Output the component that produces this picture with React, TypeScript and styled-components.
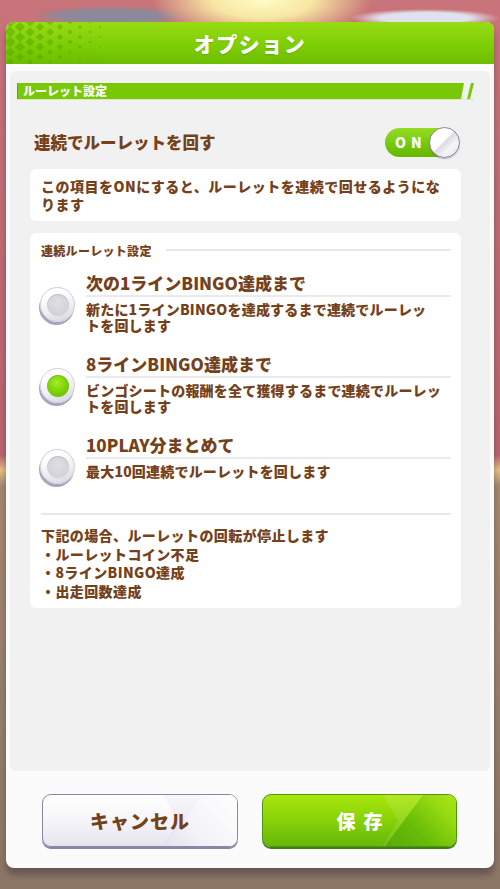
import React from 'react';
import styled, { createGlobalStyle } from 'styled-components';

const brown = '#74411a';

const GlobalStyle = createGlobalStyle`
  html, body {
    margin: 0;
    padding: 0;
    width: 500px;
    height: 889px;
    overflow: hidden;
  }
  body {
    font-family: "Noto Sans CJK JP", "Noto Sans", sans-serif;
    font-weight: 900;
  }
  * { box-sizing: border-box; }
`;

interface IOption {
  title: string,
  desc: string[],
  checked: boolean
}

const options: IOption[] = [
  { title: '次の1ラインBINGO達成まで', desc: ['新たに1ラインBINGOを達成するまで連続でルーレッ', 'トを回します'], checked: false },
  { title: '8ラインBINGO達成まで', desc: ['ビンゴシートの報酬を全て獲得するまで連続でルーレッ', 'トを回します'], checked: true },
  { title: '10PLAY分まとめて', desc: ['最大10回連続でルーレットを回します'], checked: false },
];

const notes = [
  '下記の場合、ルーレットの回転が停止します',
  '・ルーレットコイン不足',
  '・8ラインBINGO達成',
  '・出走回数達成',
];

const HeaderPattern = () => {
  const items = [];
  for (let i = 0; i < 10; i++) {
    for (let j = 0; j < 5; j++) {
      const cx = 4 + i * 10;
      const cy = j * 10 + (i % 2 ? 5 : 0);
      const s = Math.max(0, 5.6 - i * 0.5 - (j > 2 ? (j - 2) * 0.8 : 0));
      if (s <= 0.5) continue;
      items.push(
        <polygon
          key={`${i}-${j}`}
          points={`${cx},${cy - s} ${cx + s},${cy} ${cx},${cy + s} ${cx - s},${cy}`}
        />
      );
    }
  }
  return (
    <PatternSvg width="110" height="42" viewBox="0 0 110 42">
      <g fill="#55a800" opacity="0.5">{items}</g>
    </PatternSvg>
  );
};

const App = () => {
  return (
    <Page>
      <GlobalStyle />
      <Dialog>
        <Header>
          <HeaderPattern />
          <HeaderTitle>オプション</HeaderTitle>
        </Header>
        <Body>
          <Panel>
            <SectionBar>
              <BarMain>ルーレット設定</BarMain>
              <BarStripe />
            </SectionBar>
            <Content>
              <ToggleRow>
                <ToggleLabel>連続でルーレットを回す</ToggleLabel>
                <Toggle>
                  <ToggleText>ON</ToggleText>
                  <Knob />
                </Toggle>
              </ToggleRow>
              <InfoBox>
                この項目をONにすると、ルーレットを連続で回せるようにな<br />ります
              </InfoBox>
              <Card>
                <CardHeader>
                  <CardHeaderText>連続ルーレット設定</CardHeaderText>
                  <CardHeaderLine />
                </CardHeader>
                <OptionList>
                  {options.map((o) => (
                    <OptionRow key={o.title}>
                      <Radio>
                        <RadioDot $checked={o.checked} />
                      </Radio>
                      <OptionText>
                        <OptionTitle>{o.title}</OptionTitle>
                        <OptionDesc>
                          {o.desc.map((line, i) => (
                            <React.Fragment key={i}>
                              {i > 0 && <br />}
                              {line}
                            </React.Fragment>
                          ))}
                        </OptionDesc>
                      </OptionText>
                    </OptionRow>
                  ))}
                </OptionList>
                <Divider />
                <Notes>
                  {notes.map((n) => (
                    <div key={n}>{n}</div>
                  ))}
                </Notes>
              </Card>
            </Content>
          </Panel>
        </Body>
        <Footer>
          <CancelButton>
            <ButtonLabel>キャンセル</ButtonLabel>
          </CancelButton>
          <SaveButton>
            <ButtonLabel>保存</ButtonLabel>
          </SaveButton>
        </Footer>
      </Dialog>
    </Page>
  );
};

const Page = styled.div`
  width: 500px;
  height: 889px;
  padding: 22px 6px 21px;
  background:
    radial-gradient(ellipse 110px 40px at 262px 0px, #fffcc8 0%, #f8e7a2 45%, rgba(240, 190, 140, 0) 100%),
    radial-gradient(ellipse 80px 10px at 110px 16px, #8c8a9a 0%, #8c8a9a 60%, rgba(140, 138, 154, 0) 100%),
    radial-gradient(ellipse 75px 9px at 425px 18px, #dfe1ee 0%, #dfe1ee 60%, rgba(223, 225, 238, 0) 100%),
    linear-gradient(180deg, #c8747a 0px, #b9646e 455px, #e6c183 470px, #a5896f 486px, #977f6c 700px, #8b7666 889px);
`;

const Dialog = styled.div`
  height: 100%;
  display: flex;
  flex-direction: column;
  background: #fbfbfb;
  border-radius: 8px;
  overflow: hidden;
  box-shadow: 0 7px 6px rgba(60, 50, 60, 0.45);
`;

const Header = styled.header`
  position: relative;
  flex: none;
  height: 42px;
  display: flex;
  align-items: center;
  justify-content: center;
  background: linear-gradient(180deg, #97dc12 0%, #7ccc06 60%, #6cbd00 100%);
`;

const PatternSvg = styled.svg`
  position: absolute;
  left: 0;
  top: 0;
`;

const HeaderTitle = styled.h1`
  position: relative;
  margin: 0;
  font-size: 21px;
  font-weight: 900;
  letter-spacing: 1.5px;
  color: #ffffff;
  text-shadow: 0 1px 1px rgba(60, 120, 0, 0.35);
`;

const Body = styled.div`
  flex: 1;
  padding: 7px 4px 0;
`;

const Panel = styled.div`
  height: 100%;
  background: #f1f1f1;
  border-radius: 6px;
  padding-top: 12px;
`;

const SectionBar = styled.div`
  display: flex;
  gap: 3px;
  width: 457px;
  margin-left: 7px;
  height: 17px;
  border-bottom: 1px solid #d6ecbf;
`;

const BarMain = styled.div`
  flex: 1;
  height: 16px;
  line-height: 16px;
  padding-left: 5px;
  font-size: 12px;
  color: #ffffff;
  background: #78c808;
  border-left: 1px solid #5fa800;
  clip-path: polygon(0 0, 100% 0, calc(100% - 3px) 100%, 0 100%);
`;

const BarStripe = styled.div`
  width: 7px;
  height: 16px;
  background: #78c808;
  clip-path: polygon(4px 0, 100% 0, 3px 100%, 0 100%);
`;

const Content = styled.div`
  width: 431px;
  margin-left: 20px;
`;

const ToggleRow = styled.div`
  display: flex;
  align-items: center;
  justify-content: space-between;
  height: 30px;
  margin-top: 27px;
  padding: 0 2px 0 4px;
`;

const ToggleLabel = styled.span`
  font-size: 16.5px;
  color: ${brown};
`;

const Toggle = styled.div`
  position: relative;
  width: 74px;
  height: 29px;
  border-radius: 15px;
  background: linear-gradient(180deg, #96dc24 0%, #78c810 55%, #66b600 100%);
`;

const ToggleText = styled.span`
  position: absolute;
  left: 10px;
  top: 0;
  line-height: 29px;
  font-size: 14px;
  letter-spacing: 5px;
  color: #ffffff;
`;

const Knob = styled.div`
  position: absolute;
  right: -1px;
  top: -1px;
  width: 31px;
  height: 31px;
  border-radius: 50%;
  border: 1.5px solid #8a86a2;
  background: linear-gradient(135deg, #ffffff 0%, #ffffff 45%, #dcdce4 50%, #f4f4f8 70%, #e2e2ea 100%);
  box-shadow: 0 1px 1px rgba(80, 70, 110, 0.35);
`;

const InfoBox = styled.div`
  margin-top: 12px;
  padding: 8px 10px 8px 11px;
  background: #ffffff;
  border-radius: 6px;
  font-size: 14px;
  line-height: 18px;
  letter-spacing: 0.5px;
  color: ${brown};
`;

const Card = styled.div`
  margin-top: 12px;
  padding: 9px 10px 8px 11px;
  background: #ffffff;
  border-radius: 6px;
  color: ${brown};
`;

const CardHeader = styled.div`
  display: flex;
  align-items: center;
  gap: 14px;
  height: 16px;
`;

const CardHeaderText = styled.span`
  font-size: 12px;
  letter-spacing: 0.3px;
`;

const CardHeaderLine = styled.div`
  flex: 1;
  height: 2px;
  background: #e8e8e8;
`;

const OptionList = styled.div`
  display: flex;
  flex-direction: column;
  gap: 19px;
  margin-top: 13px;
`;

const OptionRow = styled.div`
  display: flex;
  align-items: flex-start;
  gap: 11px;
`;

const Radio = styled.div`
  flex: none;
  width: 35px;
  height: 35px;
  margin: 16px 0 0 -1px;
  border-radius: 50%;
  display: flex;
  align-items: center;
  justify-content: center;
  border: 1px solid #cfcdd8;
  background: linear-gradient(160deg, #ffffff 25%, #efeef3 60%, #d6d4df 100%);
  box-shadow: -1px 3px 0 #a8a3bf;
`;

const RadioDot = styled.div<{ $checked: boolean }>`
  width: 22px;
  height: 22px;
  border-radius: 50%;
  background: ${(p) =>
    p.$checked
      ? 'radial-gradient(circle at 45% 35%, #a6ec22 0%, #80d40c 45%, #62b600 100%)'
      : 'radial-gradient(circle at 50% 40%, #dedee3 0%, #d2d2d8 70%, #c6c6ce 100%)'};
  box-shadow: inset 0 1px 1px rgba(0, 0, 0, 0.12);
`;

const OptionText = styled.div`
  flex: 1;
`;

const OptionTitle = styled.div`
  height: 26px;
  line-height: 24px;
  font-size: 17px;
  border-bottom: 2px solid #ebebeb;
`;

const OptionDesc = styled.div`
  margin-top: 4px;
  font-size: 14px;
  line-height: 16px;
  letter-spacing: 0.2px;
`;

const Divider = styled.div`
  height: 2px;
  margin-top: 29px;
  background: #e8e8e8;
`;

const Notes = styled.div`
  margin-top: 11px;
  font-size: 14px;
  line-height: 18.5px;
  letter-spacing: 0.4px;
`;

const Footer = styled.div`
  flex: none;
  height: 97px;
  display: flex;
  gap: 24px;
  padding: 23px 0 0 36px;
`;

const ButtonBase = styled.div`
  position: relative;
  height: 53px;
  border-radius: 9px;
  overflow: hidden;
  display: flex;
  align-items: center;
  justify-content: center;
  font-size: 19px;
  &::before,
  &::after {
    content: '';
    position: absolute;
    top: 0;
    bottom: 0;
    left: 120px;
    right: 0;
  }
  &::before {
    clip-path: polygon(0 0, 100% 0, 100% 100%, 0 100%, 15px 50%);
  }
  &::after {
    clip-path: polygon(40px 0, 100% 0, 100% 100%, 2px 100%);
  }
`;

const CancelButton = styled(ButtonBase)`
  width: 196px;
  color: ${brown};
  letter-spacing: 1px;
  border: 1.5px solid #8a86a6;
  background: linear-gradient(180deg, #ffffff 0%, #f6f5f9 50%, #e6e4ee 100%);
  box-shadow: 0 2px 0 #8a86a6;
  &::before {
    background: linear-gradient(180deg, rgba(235, 233, 242, 0.4), rgba(225, 223, 236, 0.5));
  }
  &::after {
    background: linear-gradient(45deg, #e4e2ec 0%, #f4f3f8 40%, #ffffff 100%);
  }
`;

const SaveButton = styled(ButtonBase)`
  width: 195px;
  color: #ffffff;
  letter-spacing: 8px;
  padding-left: 8px;
  border: 1.5px solid #4c9614;
  background: linear-gradient(180deg, #abe60c 0%, #8ad408 45%, #66b808 100%);
  box-shadow: 0 2px 0 #3f7e10;
  &::before {
    background: rgba(255, 255, 255, 0.1);
  }
  &::after {
    background: linear-gradient(45deg, #56aa06 0%, #68bc08 40%, #9adc12 80%, #ace614 100%);
  }
`;

const ButtonLabel = styled.span`
  position: relative;
  z-index: 1;
`;

export default App;
